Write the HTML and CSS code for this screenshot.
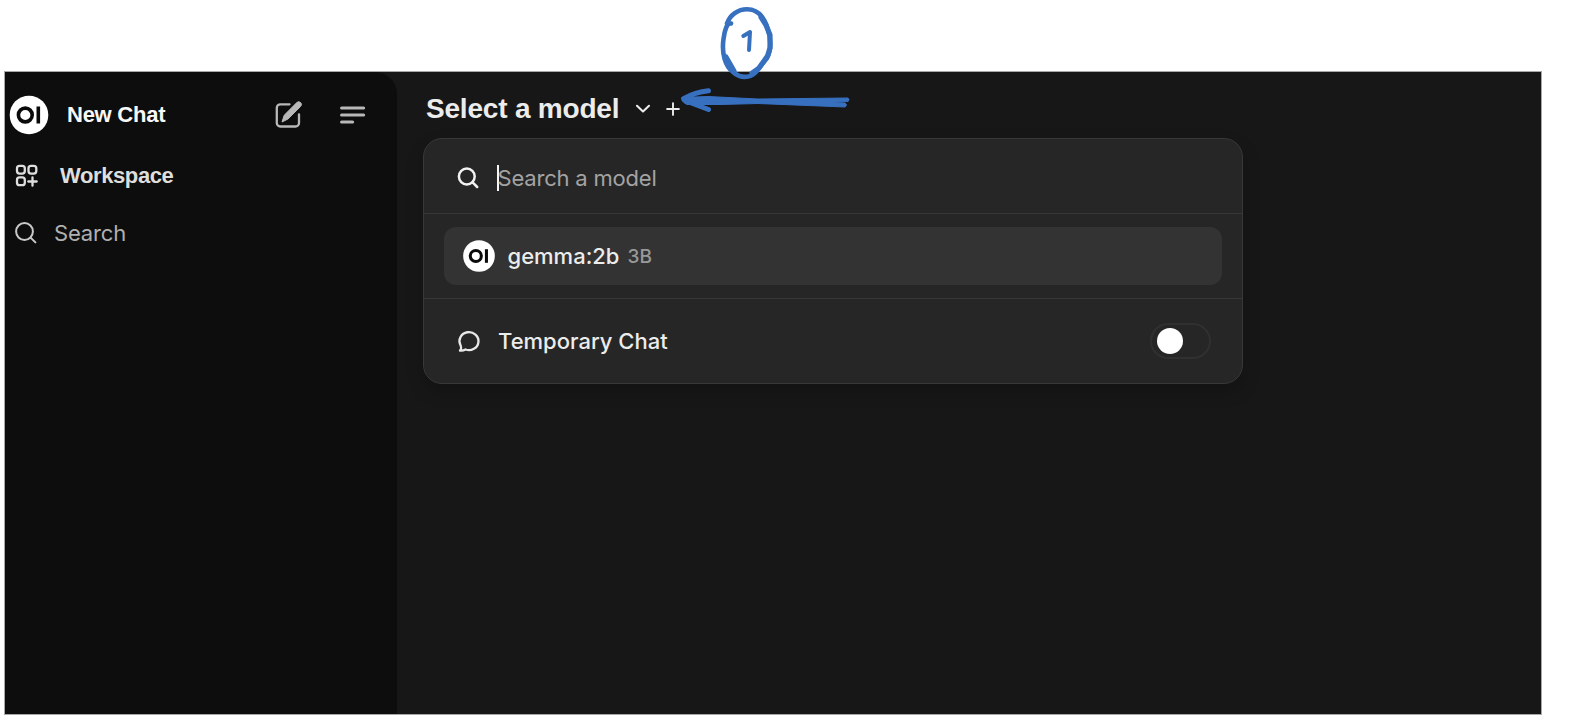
FILE: index.html
```html
<!DOCTYPE html>
<html lang="en">
<head>
<meta charset="utf-8">
<title>Open WebUI</title>
<link rel="stylesheet" href="styles.css">
</head>
<body>
<div class="app">
  <aside class="sidebar">
    <div class="new-chat">
      <svg class="logo" viewBox="0 0 40 40"><circle cx="20" cy="20" r="19.3" fill="#fff"/><circle cx="16.300" cy="20" r="6.900" fill="none" stroke="#0a0a0a" stroke-width="3.6"/><path d="M29.3 11.5v17" stroke="#0a0a0a" stroke-width="3.600"/></svg>
      <span class="new-label">New Chat</span>
      <svg class="edit" viewBox="0 0 30 30"><path d="M15.500 4.300H6.300a3.500 3.500 0 0 0-3.500 3.500v15.200a3.500 3.500 0 0 0 3.500 3.500h15.200a3.500 3.500 0 0 0 3.500-3.500V14.300" fill="none" stroke="#b8b8b8" stroke-width="2.300" stroke-linecap="round"/><path d="M8 22l2.200-6.800L22.800 2.600a2.500 2.500 0 0 1 3.800 3.800L14 19Z" fill="#b8b8b8" stroke="#b8b8b8" stroke-width="1" stroke-linejoin="round"/></svg>
      <svg class="menu" viewBox="0 0 26 20"><path d="M1.600 3h22M1.600 10h22M1.600 17h11" stroke="#b8b8b8" stroke-width="3.100" stroke-linecap="round"/></svg>
    </div>
    <div class="workspace">
      <svg class="grid" viewBox="0 0 24 24" fill="none" stroke="#dedede" stroke-width="2.300" stroke-linecap="round"><rect x="2" y="1.800" width="7.800" height="7.800" rx="2.500"/><rect x="13.500" y="1.800" width="7.800" height="7.800" rx="2.500"/><rect x="2" y="13.400" width="7.800" height="7.800" rx="2.500"/><path d="M17.500 13.300v8.400M13.300 17.500h8.400"/></svg>
      <span class="workspace-label">Workspace</span>
    </div>
    <div class="side-search">
      <svg class="lens" viewBox="0 0 24 24" fill="none" stroke="#c9c9c9" stroke-width="2" stroke-linecap="round"><circle cx="10.500" cy="10.500" r="8.400"/><path d="M16.600 16.600l4.800 4.800"/></svg>
      <span class="search-label">Search</span>
    </div>
  </aside>
  <main class="main">
    <header class="picker">
      <span class="picker-label">Select a model</span>
      <svg class="chevron" viewBox="0 0 16 10"><path d="M2 1.800l6 5.600 6-5.600" fill="none" stroke="#ececec" stroke-width="2.100" stroke-linecap="round" stroke-linejoin="round"/></svg>
      <svg class="plus" viewBox="0 0 14 14"><path d="M7 1.100v11.800M1.100 7h11.800" stroke="#ececec" stroke-width="1.900" stroke-linecap="round"/></svg>
    </header>
    <section class="popup">
      <div class="popup-search">
        <svg class="lens" viewBox="0 0 24 24" fill="none" stroke="#f2f2f2" stroke-width="2.500" stroke-linecap="round"><circle cx="10.800" cy="10.500" r="7.900"/><path d="M16.600 16.400l4.600 4.600"/></svg>
        <span class="caret"></span>
        <span class="placeholder">Search a model</span>
      </div>
      <div class="models">
        <div class="model">
          <svg class="model-logo" viewBox="0 0 40 40"><circle cx="20" cy="20" r="19.800" fill="#fff"/><circle cx="16" cy="20" r="6.900" fill="none" stroke="#0a0a0a" stroke-width="3.800"/><path d="M29.300 11.500v17" stroke="#0a0a0a" stroke-width="3.800"/></svg>
          <span class="model-name">gemma:2b</span>
          <span class="model-size">3B</span>
        </div>
      </div>
      <div class="temporary">
        <svg class="bubble" viewBox="0 0 24 24"><path d="M3.400 16A9.500 9 0 1 1 8.500 20.500C6.800 21.500 4.800 21.800 3 21.600C4 20.500 4.500 19.300 4 17.700Q3.800 16.900 3.400 16Z" fill="none" stroke="#e8e8e8" stroke-width="2.300" stroke-linejoin="round"/></svg>
        <span class="temporary-label">Temporary Chat</span>
        <span class="toggle"><span class="knob"></span></span>
      </div>
    </section>
  </main>
</div>
<svg class="annotation" viewBox="0 0 210 130" fill="none" stroke="#3870c0" stroke-linecap="round" stroke-linejoin="round">
  <path d="M71 23.500C67 22 64.500 31 63.500 39C61.500 53 65 66 73 72C80 78.500 90 78.500 96 72L107 58C112 49 110.500 37 108 30C104 15 96 9.300 87 9.300C78 9.300 70 15 67 23.500" stroke-width="4.600"/>
  <path d="M101 17L106 25L110 35V48L107.500 56L99 68L92 73M66 57L74 71" stroke-width="5.200"/>
  <path d="M83.300 36L90 32L89 50" stroke-width="4"/>
  <path d="M24 98.500Q35 92 48.500 90.700M26 101L48.500 109.500" stroke-width="5"/>
  <path d="M22 97.500L48 96.500L98 99L188 98Q190 100 188 101.500L168 102.500L185 103Q188 105 185 107L98 103.500L60 104.500L27 104.500Q20 101 22 97.500Z" fill="#3870c0" stroke-width="1"/>
</svg>
</body>
</html>
```
FILE: styles.css
```css
* { box-sizing: border-box; }
body {
  margin: 0;
  height: 718px;
  padding: 71px 38px 3px 4px;
  overflow: hidden;
  background: #fff;
  font-family: Inter, "Liberation Sans", sans-serif;
  white-space: nowrap;
}
svg { display: block; flex: none; }
.app {
  display: flex;
  height: 644px;
  border: 1px solid #a8a8a8;
  background: #171717;
}
.sidebar {
  width: 392px;
  flex: none;
  border-top-right-radius: 22px;
  background: #0d0d0d;
}
.new-chat {
  display: flex;
  align-items: center;
  height: 86px;
  padding-left: 4px;
}
.logo { width: 40px; height: 40px; }
.new-label, .workspace-label, .picker-label {
  font-family: "Liberation Sans", Arial, sans-serif;
  font-weight: 700;
}
.new-label {
  width: 205px;
  margin-left: 18px;
  font-size: 22px;
  letter-spacing: -.25px;
  color: #f8f8f8;
}
.edit { width: 30px; height: 30px; margin-left: 2px; }
.menu { width: 26px; height: 20px; margin-left: 36px; }
.workspace {
  display: flex;
  align-items: center;
  height: 34px;
  padding: 1px 0 0 10px;
}
.grid { width: 24px; height: 24px; }
.workspace-label {
  margin-left: 21px;
  font-size: 22px;
  letter-spacing: -.4px;
  color: #dedede;
}
.side-search {
  display: flex;
  align-items: center;
  height: 34px;
  margin-top: 24px;
  padding-left: 9px;
}
.lens { width: 24px; height: 24px; }
.search-label {
  margin-left: 16px;
  font-size: 22px;
  letter-spacing: -.15px;
  color: #b0b0b0;
}
.main { flex: 1; padding-left: 26px; }
.picker {
  display: flex;
  align-items: center;
  height: 66px;
  padding: 7px 0 0 3px;
}
.picker-label {
  width: 194px;
  font-size: 28px;
  letter-spacing: -.2px;
  color: #ececec;
}
.chevron { width: 16px; height: 10px; margin-left: 15px; }
.plus { width: 14px; height: 14px; margin-left: 15px; }
.popup {
  width: 820px;
  height: 246px;
  border: 1px solid #383838;
  border-radius: 19px;
  background: #262626;
  box-shadow: 0 8px 18px rgba(0, 0, 0, .2);
}
.popup-search {
  display: flex;
  align-items: center;
  height: 74px;
  padding: 3px 0 0 32px;
}
.caret {
  width: 1.500px;
  height: 26px;
  margin: 0 -1px 0 17px;
  background: #f5f5f5;
}
.placeholder { font-size: 22px; letter-spacing: -.2px; color: #a3a3a3; }
.models {
  height: 86px;
  padding: 13px 20px;
  border-top: 1px solid #383838;
  border-bottom: 1px solid #383838;
}
.model {
  display: flex;
  align-items: center;
  height: 58px;
  padding-left: 19px;
  border-radius: 12px;
  background: #333;
}
.model-logo { width: 32px; height: 32px; }
.model-name {
  width: 114px;
  margin-left: 12.500px;
  font-size: 22px;
  font-weight: 500;
  color: #ececec;
}
.model-size {
  margin-left: 6px;
  padding-top: 1px;
  font-size: 19px;
  font-weight: 500;
  color: #999;
}
.temporary {
  display: flex;
  align-items: center;
  height: 84px;
  padding: 0 31px 0 33px;
}
.bubble { width: 24px; height: 24px; }
.temporary-label {
  margin-left: 17px;
  font-size: 22px;
  font-weight: 500;
  color: #ececec;
}
.toggle {
  display: flex;
  align-items: center;
  width: 61px;
  height: 36px;
  margin-left: auto;
  padding-left: 5px;
  border: 2px solid #303030;
  border-radius: 18px;
}
.knob { width: 26px; height: 26px; border-radius: 50%; background: #fff; }
.annotation {
  position: absolute;
  left: 660px;
  top: 0;
  width: 210px;
  height: 130px;
}
```
